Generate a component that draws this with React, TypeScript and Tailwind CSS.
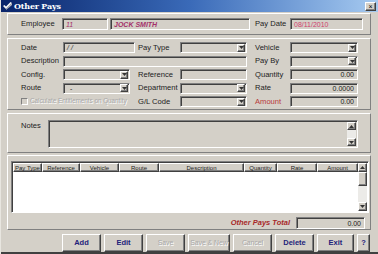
import React from "react";

const font = "font-['Liberation_Sans',Arial,sans-serif]";
const sunken =
  "box-border border border-t-[#808080] border-l-[#808080] border-b-white border-r-white shadow-[inset_1px_1px_0_#404040] bg-[#d4d0c8]";
const raised =
  "box-border border border-t-white border-l-white border-b-[#404040] border-r-[#404040] shadow-[inset_-1px_-1px_0_#808080] bg-[#d4d0c8]";
const panel =
  "box-border border border-t-white border-l-white border-b-[#808080] border-r-[#808080]";

function Label({ w, children, red }: { w: string; children: React.ReactNode; red?: boolean }) {
  return (
    <div className={`${w} shrink-0 text-[7.6px] leading-none whitespace-nowrap ${red ? "text-[#b83a3a]" : "text-[#222]"}`}>
      {children}
    </div>
  );
}

function Input({ w, value, right, h = "h-[11px]", tone }: { w: string; value?: string; right?: boolean; h?: string; tone?: string }) {
  return (
    <div className={`${sunken} ${w} ${h} shrink-0 flex items-center px-[3px] ${right ? "justify-end" : ""}`}>
      {value && (
        <span className={`text-[7px] leading-none whitespace-nowrap ${tone ?? "text-[#222]"}`}>{value}</span>
      )}
    </div>
  );
}

function Arrow({ up }: { up?: boolean }) {
  return (
    <svg width="5" height="3" viewBox="0 0 5 3" className={up ? "rotate-180" : ""}>
      <path d="M0 0h5L2.5 3z" fill="#333" />
    </svg>
  );
}

function Select({ w, value }: { w: string; value?: string }) {
  return (
    <div className={`${sunken} ${w} h-[11px] shrink-0 flex items-center pl-[6px] pr-[1px]`}>
      <span className="text-[7px] leading-none text-[#222] flex-1">{value}</span>
      <div className={`${raised} w-[8px] h-[8px] flex items-center justify-center`}>
        <Arrow />
      </div>
    </div>
  );
}

function Btn({ label, disabled, w = "w-[39px]" }: { label: string; disabled?: boolean; w?: string }) {
  return (
    <div
      className={`${raised} ${w} h-[18px] shrink-0 flex items-center justify-center leading-none whitespace-nowrap ${
        disabled ? "text-[6.8px] text-[#a8a8a8] [text-shadow:1px_1px_0_#fff]" : "text-[7.5px] text-[#22227a] font-semibold"
      }`}
    >
      {label}
    </div>
  );
}

const cols = [
  { t: "Pay Type", w: "w-[29px]", left: true },
  { t: "Reference", w: "w-[38px]" },
  { t: "Vehicle", w: "w-[39px]" },
  { t: "Route", w: "w-[40px]" },
  { t: "Description", w: "w-[85px]" },
  { t: "Quantity", w: "w-[33px]" },
  { t: "Rate", w: "w-[40px]" },
  { t: "Amount", w: "w-[41px]" },
];

export default function App() {
  return (
    <div className={`${font} w-[378px] h-[254px] bg-[#d4d0c8] flex flex-col overflow-hidden border-l border-l-[#e8e6e0]`}>
      {/* title bar */}
      <div className="h-[12px] shrink-0 flex items-center bg-gradient-to-r from-[#0a246a] via-[#3a6ab8] to-[#a6caf0] pl-[2px] pr-[2px]">
        <svg width="9" height="8" viewBox="0 0 9 8">
          <path d="M0 4l3 3 6-6-1.5-1L3 4.5 1.5 3z" fill="#f4f4f4" />
          <path d="M3 7l6-6v2L3 8z" fill="#b8b8b8" />
        </svg>
        <span className="ml-[2px] text-[8px] font-bold text-white leading-none font-['DejaVu_Serif',serif] tracking-[-0.2px]">Other Pays</span>
        <div className="flex-1" />
        <div className={`${raised} w-[11px] h-[9px] flex items-center justify-center text-[7px] leading-none text-black`}>×</div>
      </div>

      <div className="flex flex-col px-[7px] pr-[7px] -ml-px">
        {/* employee */}
        <div className={`${panel} mt-[1px] h-[22px] flex items-center pl-[13px]`}>
          <Label w="w-[41px]">Employee</Label>
          <Input w="w-[46px]" h="h-[12px]" value="11" tone="text-[#a4306a] italic" />
          <Input w="w-[140px] ml-[2px]" h="h-[12px]" value="JOCK SMITH" tone="text-[#a4306a] italic font-semibold" />
          <div className="ml-[5px]">
            <Label w="w-[35px]">Pay Date</Label>
          </div>
          <Input w="w-[73px]" h="h-[12px]" value="08/11/2010" tone="text-[#d0406e]" />
        </div>

        {/* details */}
        <div className={`${panel} mt-[3px] h-[72px] pt-[3px] pl-[13px] flex flex-col gap-[2.5px]`}>
          <div className="flex items-center">
            <Label w="w-[42px]">Date</Label>
            <Input w="w-[72px]" value="/ /" tone="text-[#333] italic" />
            <div className="ml-[3px]"><Label w="w-[42px]">Pay Type</Label></div>
            <Select w="w-[67px]" />
            <div className="ml-[8px]"><Label w="w-[35px]">Vehicle</Label></div>
            <Select w="w-[68px]" />
          </div>
          <div className="flex items-center">
            <Label w="w-[42px]">Description</Label>
            <Input w="w-[184px]" />
            <div className="ml-[8px]"><Label w="w-[35px]">Pay By</Label></div>
            <Select w="w-[68px]" />
          </div>
          <div className="flex items-center">
            <Label w="w-[42px]">Config.</Label>
            <Select w="w-[67px]" />
            <div className="ml-[8px]"><Label w="w-[42px]">Reference</Label></div>
            <Input w="w-[67px]" />
            <div className="ml-[8px]"><Label w="w-[35px]">Quantity</Label></div>
            <Input w="w-[68px]" value="0.00" right />
          </div>
          <div className="flex items-center">
            <Label w="w-[42px]">Route</Label>
            <Select w="w-[67px]" value="-" />
            <div className="ml-[8px]"><Label w="w-[42px]">Department</Label></div>
            <Select w="w-[67px]" />
            <div className="ml-[8px]"><Label w="w-[35px]">Rate</Label></div>
            <Input w="w-[68px]" value="0.0000" right />
          </div>
          <div className="flex items-center">
            <div className="w-[117px] shrink-0 flex items-center">
              <div className="w-[7px] h-[7px] box-border border border-t-[#808080] border-l-[#808080] border-b-white border-r-white bg-[#d4d0c8]" />
              <span className="ml-[2px] text-[6.3px] leading-none text-[#a8a8a8] [text-shadow:1px_1px_0_#fff] whitespace-nowrap">
                Calculate Entitlements on Quantity
              </span>
            </div>
            <Label w="w-[42px]">G/L Code</Label>
            <Select w="w-[67px]" />
            <div className="ml-[8px]"><Label w="w-[35px]" red>Amount</Label></div>
            <Input w="w-[68px]" value="0.00" right />
          </div>
        </div>

        {/* notes */}
        <div className={`${panel} mt-[3px] h-[40px] pt-[6px] pl-[13px] flex`}>
          <div className="w-[27px] pt-[2px]"><Label w="w-[27px]">Notes</Label></div>
          <div className={`${sunken} w-[310px] h-[28px] flex justify-end p-[1px]`}>
            <div className="w-[9px] h-full flex flex-col bg-[#ecebe8]">
              <div className={`${raised} h-[8px] flex items-center justify-center`}><Arrow up /></div>
              <div className="flex-1" />
              <div className={`${raised} h-[8px] flex items-center justify-center`}><Arrow /></div>
            </div>
          </div>
        </div>

        {/* grid */}
        <div className={`${panel} mt-[2px] h-[75px] pt-[5px] pl-[3px] flex flex-col`}>
          <div className={`${sunken} w-[358px] h-[52px] flex bg-white p-[1px]`}>
            <div className="flex-1 flex flex-col bg-white">
              <div className="flex h-[9px]">
                {cols.map((c) => (
                  <div
                    key={c.t}
                    className={`${raised} ${c.w} shrink-0 flex items-center ${c.left ? "pl-[1px]" : "justify-center"} text-[6px] leading-none text-[#222] whitespace-nowrap overflow-hidden`}
                  >
                    {c.t}
                  </div>
                ))}
              </div>
            </div>
            <div className="w-[10px] flex flex-col bg-[#ecebe8]">
              <div className={`${raised} h-[9px] flex items-center justify-center`}><Arrow up /></div>
              <div className={`${raised} h-[14px]`} />
              <div className="flex-1" />
              <div className={`${raised} h-[9px] flex items-center justify-center`}><Arrow /></div>
            </div>
          </div>
          <div className="mt-[4px] mr-[5px] flex items-center justify-end">
            <span className="text-[7.5px] font-bold italic text-[#a82828] leading-none">Other Pays Total</span>
            <div className="ml-[6px]">
              <Input w="w-[69px]" h="h-[12px]" value="0.00" right />
            </div>
          </div>
        </div>

        {/* buttons */}
        <div className="mt-[4px] mr-[1px] flex justify-end gap-[3px]">
          <Btn label="Add" />
          <Btn label="Edit" />
          <Btn label="Save" disabled />
          <Btn label="Save & New" disabled w="w-[42px]" />
          <Btn label="Cancel" disabled />
          <Btn label="Delete" />
          <Btn label="Exit" w="w-[37px]" />
          <Btn label="?" w="w-[13px]" />
        </div>
      </div>
      <div className="mt-auto h-[2px] bg-[#404040]" />
    </div>
  );
}
